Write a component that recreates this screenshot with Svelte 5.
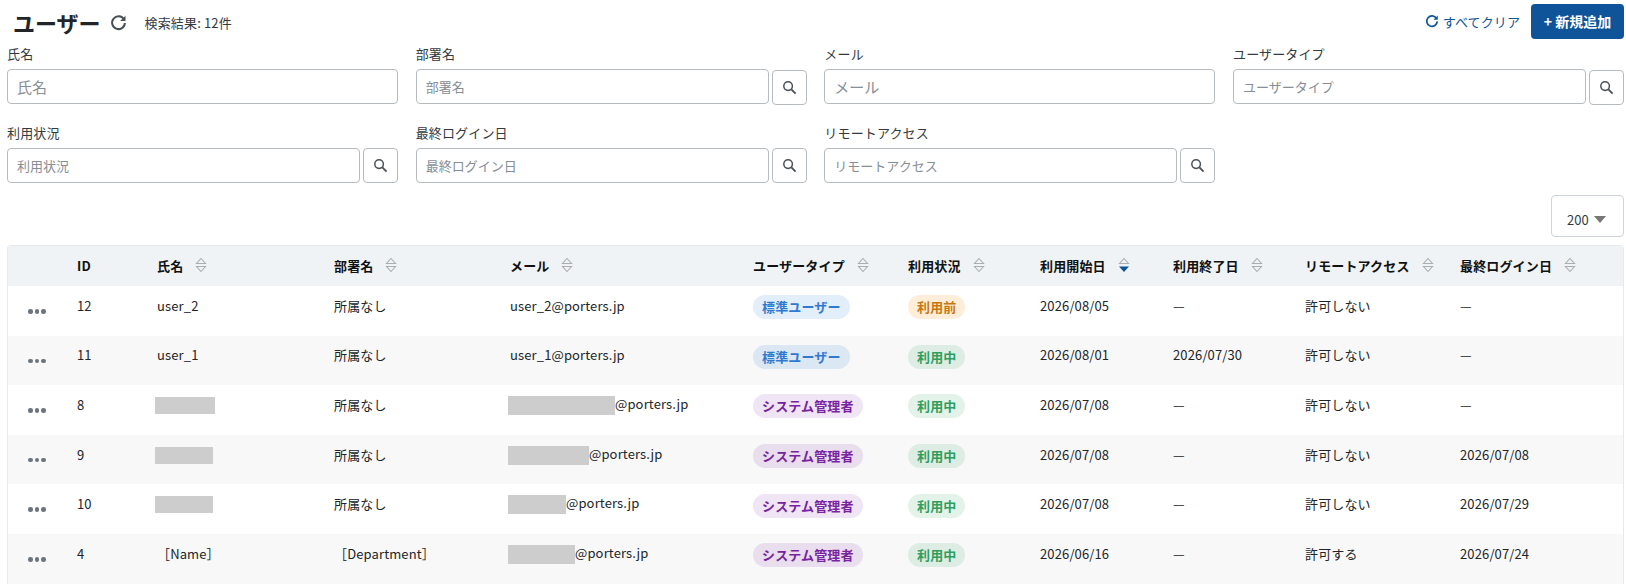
<script>
  const filters = [
    { label: '氏名', search: false, large: true },
    { label: '部署名', search: true },
    { label: 'メール', search: false, large: true },
    { label: 'ユーザータイプ', search: true },
    { label: '利用状況', search: true },
    { label: '最終ログイン日', search: true },
    { label: 'リモートアクセス', search: true }
  ];
  const columns = [
    { label: '', w: 69 }, { label: 'ID', w: 80 }, { label: '氏名', w: 177, sort: true },
    { label: '部署名', w: 176, sort: true }, { label: 'メール', w: 243, sort: true },
    { label: 'ユーザータイプ', w: 155, sort: true }, { label: '利用状況', w: 132, sort: true },
    { label: '利用開始日', w: 133, sort: true, active: true }, { label: '利用終了日', w: 132, sort: true },
    { label: 'リモートアクセス', w: 155, sort: true }, { label: '最終ログイン日', w: 163, sort: true }
  ];
  const rows = [
    { id: 12, name: 'user_2', dept: '所属なし', mail: 'user_2', type: 'std', status: 'pre', start: '2026/08/05', end: '—', remote: '許可しない', last: '—' },
    { id: 11, name: 'user_1', dept: '所属なし', mail: 'user_1', type: 'std', status: 'act', start: '2026/08/01', end: '2026/07/30', remote: '許可しない', last: '—' },
    { id: 8, nameBox: 60, dept: '所属なし', mailBox: 107, type: 'sys', status: 'act', start: '2026/07/08', end: '—', remote: '許可しない', last: '—' },
    { id: 9, nameBox: 58, dept: '所属なし', mailBox: 81, type: 'sys', status: 'act', start: '2026/07/08', end: '—', remote: '許可しない', last: '2026/07/08' },
    { id: 10, nameBox: 58, dept: '所属なし', mailBox: 58, type: 'sys', status: 'act', start: '2026/07/08', end: '—', remote: '許可しない', last: '2026/07/29' },
    { id: 4, name: '［Name］', dept: '［Department］', mailBox: 67, type: 'sys', status: 'act', start: '2026/06/16', end: '—', remote: '許可する', last: '2026/07/24' }
  ];
  const typeLabel = { std: '標準ユーザー', sys: 'システム管理者' };
  const statusLabel = { pre: '利用前', act: '利用中' };
</script>

{#snippet refresh(size)}
  <svg width={size} height={size} viewBox="0 0 16 16" fill="none" aria-hidden="true">
    <path d="M13.2 5.2A6 6 0 1 0 14 8.4" stroke="currentColor" stroke-width="1.9" />
    <path d="M14.6 1.6v5h-5z" fill="currentColor" />
  </svg>
{/snippet}

{#snippet magnifier()}
  <svg width="15" height="15" viewBox="0 0 16 16" fill="none" aria-hidden="true">
    <circle cx="6.5" cy="6.5" r="4.6" stroke="#495057" stroke-width="1.6" />
    <path d="M10 10l4.5 4.5" stroke="#495057" stroke-width="2" />
  </svg>
{/snippet}

<div class="page">
  <header class="top">
    <div class="title-group">
      <h1>ユーザー</h1>
      <span class="reload">{@render refresh(17)}</span>
      <span class="count">検索結果: 12件</span>
    </div>
    <div class="actions">
      <span class="clear">{@render refresh(14)}すべてクリア</span>
      <button class="add">+ 新規追加</button>
    </div>
  </header>

  <section class="filters">
    {#each filters as f}
      <div class="field">
        <span class="label">{f.label}</span>
        <div class="control">
          <div class="input" class:large={f.large}>{f.label}</div>
          {#if f.search}
            <button class="search">{@render magnifier()}</button>
          {/if}
        </div>
      </div>
    {/each}
  </section>

  <div class="pager">
    <div class="size">200<span class="caret"></span></div>
  </div>

  <div class="table-wrap">
    <table>
      <colgroup>
        {#each columns as c}<col style="width:{c.w}px" />{/each}
      </colgroup>
      <thead>
        <tr>
          {#each columns as c}
            <th>
              <span class="th-inner">
                {c.label}
                {#if c.sort}
                  <svg class="sort" width="12" height="16" viewBox="0 0 12 16" aria-hidden="true">
                    <path d="M6 1.5L10.5 6.5H1.5z" fill="none" stroke="#a9aeb3" stroke-width="1.1" />
                    {#if c.active}
                      <path d="M1 9.5H11L6 15z" fill="#0f5499" />
                    {:else}
                      <path d="M6 14.5L10.5 9.5H1.5z" fill="none" stroke="#a9aeb3" stroke-width="1.1" />
                    {/if}
                  </svg>
                {/if}
              </span>
            </th>
          {/each}
        </tr>
      </thead>
      <tbody>
        {#each rows as r}
          <tr>
            <td class="dots-cell"><span class="dots"><i></i><i></i><i></i></span></td>
            <td>{r.id}</td>
            <td>
              {#if r.nameBox}<span class="redact name-box" style="width:{r.nameBox}px"></span>{:else}{r.name}{/if}
            </td>
            <td>{r.dept}</td>
            <td>
              {#if r.mailBox}<span class="redact mail-box" style="width:{r.mailBox}px"></span>{:else}{r.mail}{/if}@porters.jp
            </td>
            <td><span class="badge {r.type}">{typeLabel[r.type]}</span></td>
            <td><span class="badge {r.status}">{statusLabel[r.status]}</span></td>
            <td>{r.start}</td>
            <td>{r.end}</td>
            <td>{r.remote}</td>
            <td>{r.last}</td>
          </tr>
        {/each}
      </tbody>
    </table>
  </div>
</div>

<style>
  :global(body) {
    margin: 0;
    background: #fff;
    overflow: hidden;
  }
  .page {
    height: 587px;
    overflow: hidden;
    box-sizing: border-box;
    padding: 3px 2px 0 7px;
    font-family: "Noto Sans CJK JP", "Noto Sans", sans-serif;
    font-size: 13px;
    color: #212529;
  }
  .top {
    display: flex;
    justify-content: space-between;
    align-items: center;
    height: 36px;
    margin-bottom: 5px;
  }
  .title-group, .actions {
    display: flex;
    align-items: center;
  }
  .title-group {
    padding-top: 2px;
  }
  h1 {
    margin: 0 0 0 6px;
    font-size: 22px;
    line-height: 30px;
    font-weight: 700;
  }
  .reload {
    display: flex;
    margin-left: 9px;
    color: #495057;
  }
  .count {
    margin-left: 18px;
    font-size: 13px;
    letter-spacing: 0.15px;
    color: #343a40;
  }
  .clear {
    display: flex;
    align-items: center;
    gap: 4px;
    color: #0f5499;
    font-size: 13px;
    letter-spacing: 0.1px;
    margin-right: 11px;
  }
  .add {
    width: 93px;
    height: 35px;
    border: 0;
    border-radius: 4px;
    background: #0f5499;
    color: #fff;
    font: 700 14px "Noto Sans CJK JP", sans-serif;
  }
  .filters {
    display: grid;
    grid-template-columns: repeat(4, 1fr);
    column-gap: 17.67px;
    row-gap: 18px;
  }
  .label {
    display: block;
    font-size: 13px;
    letter-spacing: 0.15px;
    line-height: 20px;
    color: #343a40;
    margin-bottom: 5px;
  }
  .control {
    display: flex;
    gap: 3px;
  }
  .input {
    flex: 1;
    box-sizing: border-box;
    height: 35px;
    line-height: 33px;
    padding: 0 9px;
    border: 1px solid #b6bbc0;
    border-radius: 4px;
    color: #868e96;
    font-size: 13px;
  }
  .input.large {
    font-size: 15px;
  }
  .search {
    width: 35px;
    height: 35px;
    padding: 0;
    background: #fff;
    border: 1px solid #b6bbc0;
    border-radius: 4px;
    display: flex;
    align-items: center;
    justify-content: center;
  }
  .field:nth-child(-n+4) .search {
    margin-top: 1px;
  }
  .pager {
    display: flex;
    justify-content: flex-end;
    margin-top: 12px;
    margin-bottom: 8px;
  }
  .size {
    box-sizing: border-box;
    width: 73px;
    height: 42px;
    border: 1px solid #ced4da;
    border-radius: 4px;
    display: flex;
    align-items: center;
    padding: 7px 0 0 15px;
    gap: 5px;
    font-size: 13px;
    color: #343a40;
  }
  .caret {
    width: 0;
    height: 0;
    border-left: 6.5px solid transparent;
    border-right: 6.5px solid transparent;
    border-top: 7px solid #777;
  }
  .table-wrap {
    border: 1px solid #e6e9ec;
    border-bottom: 0;
    border-radius: 4px 4px 0 0;
  }
  table {
    width: 100%;
    border-collapse: collapse;
    table-layout: fixed;
  }
  th {
    box-sizing: border-box;
    height: 40px;
    padding: 0 0 2px;
    background: #eff3f6;
    text-align: left;
    font-weight: 700;
    font-size: 13px;
    letter-spacing: 0.15px;
    color: #111;
  }
  .th-inner {
    display: flex;
    align-items: center;
    gap: 12px;
  }
  .sort {
    flex: none;
  }
  td {
    height: 49.6px;
    padding: 0 0 11px;
    box-sizing: border-box;
    font-size: 13px;
    letter-spacing: 0.13px;
    color: #212529;
    white-space: nowrap;
  }
  tbody tr:nth-child(even) td {
    background: #f8f8f8;
  }
  .dots-cell {
    padding: 1px 0 0 20px;
  }
  .dots {
    display: flex;
    gap: 2px;
  }
  .dots i {
    width: 4.5px;
    height: 4.5px;
    border-radius: 50%;
    background: #6c757d;
  }
  .redact {
    display: inline-block;
    background: #cdcdcd;
    vertical-align: middle;
  }
  .name-box { height: 17px; margin: -2px 0 0 -2px; }
  .mail-box { height: 19px; margin-left: -2px; }
  .badge {
    display: inline-block;
    margin-top: 4px;
    padding: 0 9px;
    line-height: 24px;
    border-radius: 12px;
    font-size: 13px;
    font-weight: 700;
  }
  .std { background: rgba(25, 113, 218, 0.12); color: #2f7ad0; }
  .sys { background: rgba(125, 40, 170, 0.12); color: #7a23a0; }
  .pre { background: rgba(250, 150, 30, 0.17); color: #c9780f; }
  .act { background: rgba(45, 165, 95, 0.13); color: #2f9e5e; }
</style>
